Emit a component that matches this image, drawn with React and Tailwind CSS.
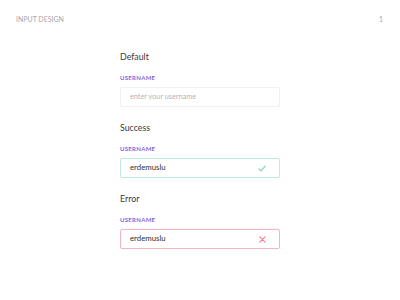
import React from 'react';

const font = { fontFamily: 'Lato, "Open Sans", sans-serif' };

function Field({ title, value, placeholder, status }) {
  const border =
    status === 'success' ? 'border-[#bfe9d9]' : status === 'error' ? 'border-[#f3b6c0]' : 'border-[#f0f0f2]';
  return (
    <section>
      <h2 className="text-[8.8px] leading-[14px] text-[#38383c]">{title}</h2>
      <div className="mt-[10px] text-[6px] leading-[8px] font-bold tracking-[0.3px] text-[#7b69d9]">USERNAME</div>
      <div className={`mt-[5px] h-[20px] border rounded-[2px] flex items-center pl-[9px] pr-[13px] ${border}`}>
        {value ? (
          <span className="flex-1 text-[7.8px] text-[#2f2f33]">{value}</span>
        ) : (
          <span className="flex-1 text-[7.3px] text-[#b4b4b8]">{placeholder}</span>
        )}
        {status === 'success' && (
          <svg width="8" height="7" viewBox="0 0 8 7" fill="none">
            <path d="M0.8 3.8 L2.9 5.8 L7.2 1.2" stroke="#7fd3b1" strokeWidth="1.1" strokeLinecap="round" strokeLinejoin="round" />
          </svg>
        )}
        {status === 'error' && (
          <svg width="7" height="7" viewBox="0 0 7 7" fill="none">
            <path d="M0.8 0.8 L6.2 6.2 M6.2 0.8 L0.8 6.2" stroke="#f07a90" strokeWidth="1.1" strokeLinecap="round" />
          </svg>
        )}
      </div>
    </section>
  );
}

export default function App() {
  return (
    <main className="w-[400px] h-[300px] bg-white overflow-hidden" style={font}>
      <header className="flex justify-between pl-4 pr-[17px] pt-[14px] text-[7px] leading-[10px] text-[#a9a9ad]">
        <span>INPUT DESIGN</span>
        <span>1</span>
      </header>
      <div className="ml-[120px] w-[160px] mt-[26px] flex flex-col gap-[14px]">
        <Field title="Default" placeholder="enter your username" />
        <Field title="Success" value="erdemuslu" status="success" />
        <Field title="Error" value="erdemuslu" status="error" />
      </div>
    </main>
  );
}
